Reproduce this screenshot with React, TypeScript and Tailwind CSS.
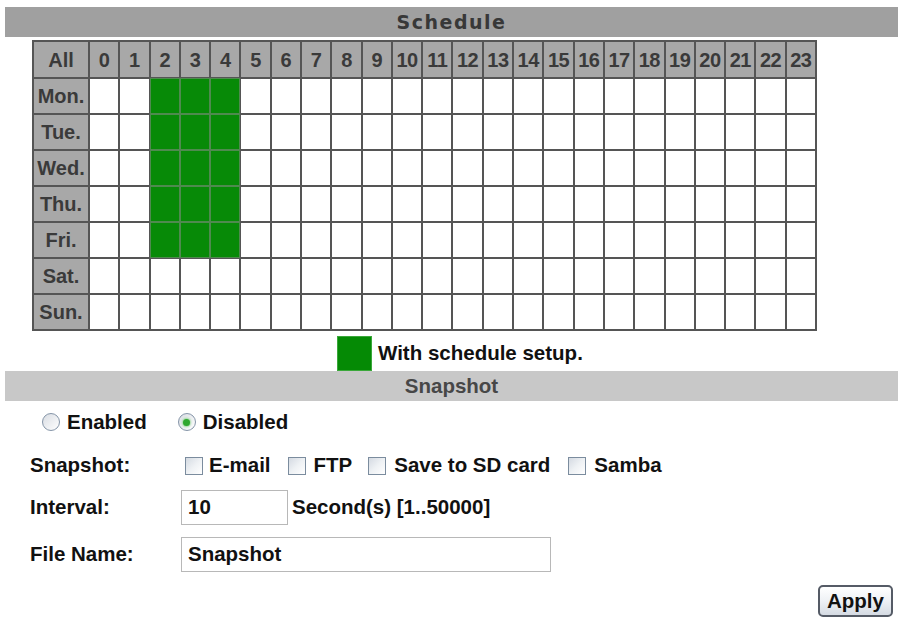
import React from "react";

const hours = Array.from({ length: 24 }, (_, i) => i);
const days = ["Mon.", "Tue.", "Wed.", "Thu.", "Fri.", "Sat.", "Sun."];

function Radio({ checked }: { checked?: boolean }) {
  return (
    <span className="w-[18px] h-[18px] rounded-full border border-[#8595a8] bg-gradient-to-br from-[#d9dde3] to-white flex items-center justify-center shrink-0">
      {checked && <span className="w-[7px] h-[7px] rounded-full bg-[#2fa82f] shadow-[0_0_2px_1px_#9bd89b]" />}
    </span>
  );
}

function Check() {
  return (
    <span className="block w-[18px] h-[18px] border border-[#7b8c9e] bg-gradient-to-br from-[#d4dae2] via-[#eef1f4] to-white shrink-0" />
  );
}

export default function App() {
  return (
    <div className="w-[898px] h-[621px] bg-white font-['Liberation_Sans',Arial,sans-serif] font-bold text-[20.5px] text-[#111] overflow-hidden">
      <div className="pt-[7px] pl-[5px]">
        <div className="h-[30px] bg-[#a0a0a0] flex items-center justify-center">
          <span className="font-['DejaVu_Sans',sans-serif] text-[19px] tracking-[1.5px] text-[#383838] leading-none">Schedule</span>
        </div>
      </div>

      <div className="mt-[3px] ml-[32px] w-[785px] grid grid-cols-[54px_repeat(24,minmax(0,1fr))] grid-rows-[35px_repeat(7,34px)] gap-[2px] bg-[#555] p-[2px] text-[#3a3a3a] text-[20px]">
        <div className="bg-[#a8a8a8] flex items-center justify-center leading-none">All</div>
        {hours.map((h) => (
          <div key={h} className="bg-[#a8a8a8] flex items-center justify-center leading-none tracking-[-0.5px]">{h}</div>
        ))}
        {days.map((d, di) => (
          <React.Fragment key={d}>
            <div className="bg-[#a8a8a8] flex items-center justify-center leading-none">{d}</div>
            {hours.map((h) => {
              const on = di < 5 && h >= 2 && h <= 4;
              return on ? (
                <div key={h} className="bg-[#078a07] shadow-[0_0_0_1px_#4f8a4f]" />
              ) : (
                <div key={h} className="bg-white" />
              );
            })}
          </React.Fragment>
        ))}
      </div>

      <div className="h-[40px] flex items-end pl-[337px]">
        <span className="w-[35px] h-[35px] bg-[#058a05] border border-[#3aa83a]" />
        <span className="ml-[6px] self-center mt-[4px] leading-none">With schedule setup.</span>
      </div>

      <div className="pl-[5px]">
        <div className="h-[30px] bg-[#c8c8c8] flex items-center justify-center text-[#474747] leading-none">Snapshot</div>
      </div>

      <div className="h-[42px] flex items-center pl-[42px]">
        <Radio />
        <span className="ml-[7px] leading-none">Enabled</span>
        <span className="ml-[31px]"><Radio checked /></span>
        <span className="ml-[7px] leading-none">Disabled</span>
      </div>

      <div className="h-[45px] flex items-center pl-[30px]">
        <span className="w-[155px] leading-none">Snapshot:</span>
        <Check />
        <span className="ml-[6px] leading-none">E-mail</span>
        <span className="ml-[17px]"><Check /></span>
        <span className="ml-[8px] leading-none">FTP</span>
        <span className="ml-[16px]"><Check /></span>
        <span className="ml-[8px] leading-none">Save to SD card</span>
        <span className="ml-[18px]"><Check /></span>
        <span className="ml-[8px] leading-none">Samba</span>
      </div>

      <div className="mt-[2px] h-[35px] flex items-center pl-[30px]">
        <span className="w-[151px] leading-none">Interval:</span>
        <div className="w-[107px] h-[35px] border border-[#b8b8b8] flex items-center px-[6px] leading-none">10</div>
        <span className="ml-[4px] leading-none">Second(s) [1..50000]</span>
      </div>

      <div className="mt-[12px] h-[35px] flex items-center pl-[30px]">
        <span className="w-[151px] leading-none">File Name:</span>
        <div className="w-[370px] h-[35px] border border-[#b8b8b8] flex items-center px-[6px] leading-none">Snapshot</div>
      </div>

      <div className="mt-[13px] flex justify-end pr-[5px]">
        <div className="w-[75px] h-[32px] rounded-[5px] border-2 border-[#555b66] bg-gradient-to-b from-white via-[#eef1f5] to-[#d5dbe3] flex items-center justify-center leading-none text-[#111]">Apply</div>
      </div>
    </div>
  );
}
